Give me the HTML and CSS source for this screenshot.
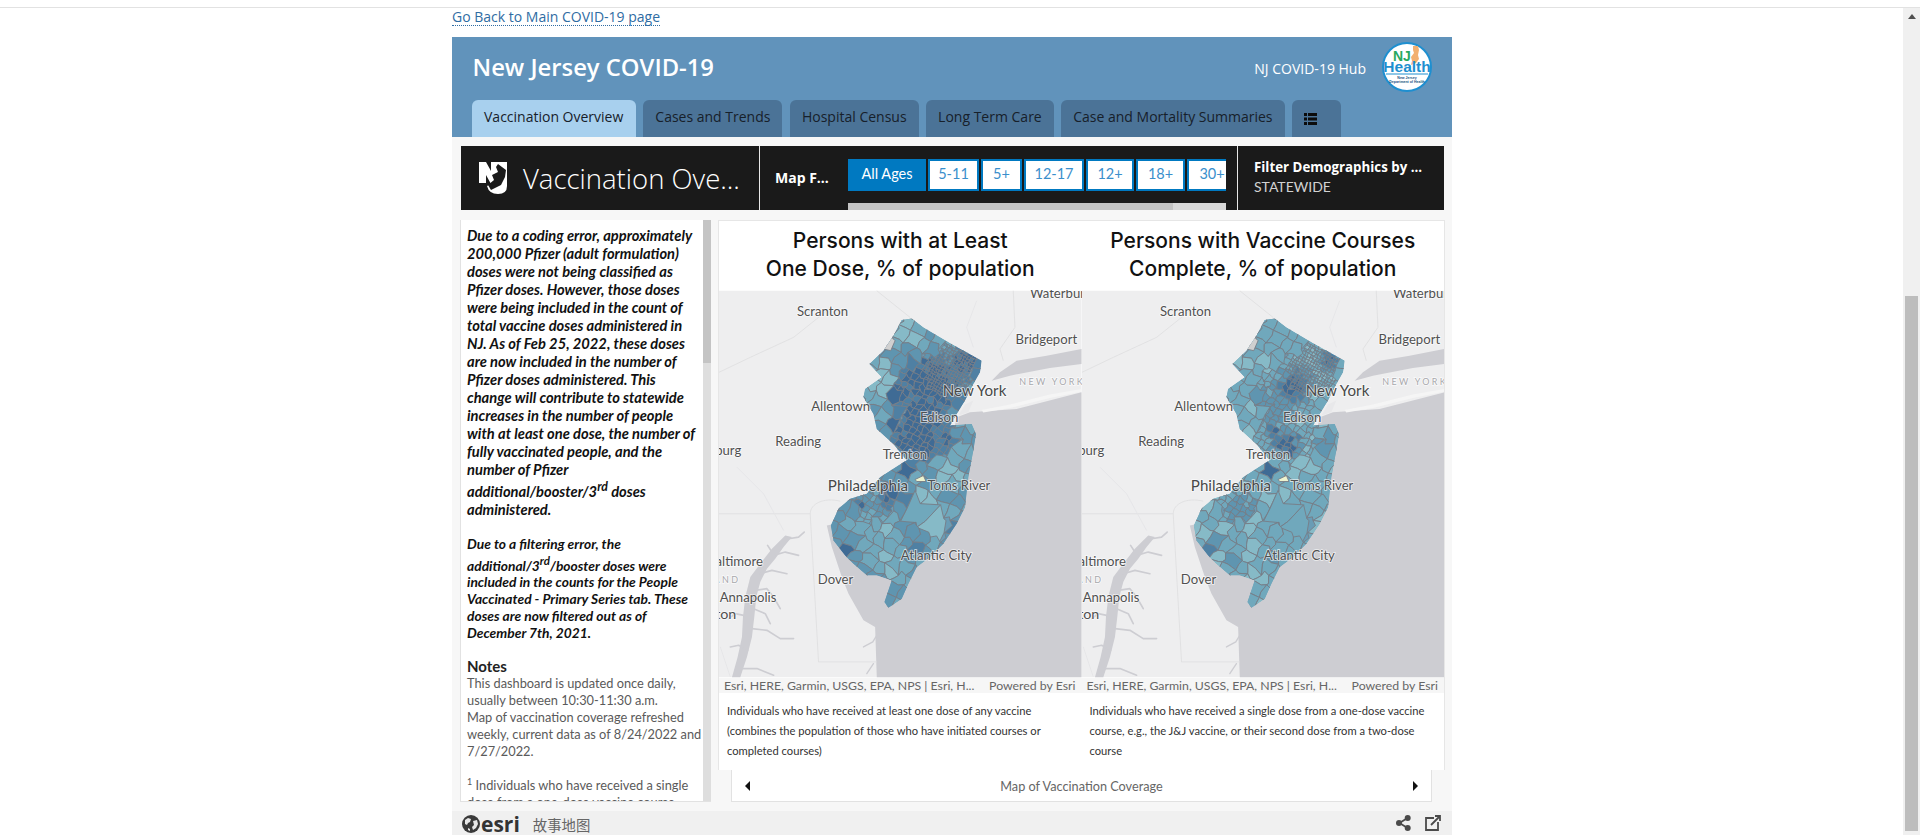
FILE: index.html
```html
<!DOCTYPE html>
<html lang="en">
  <head>
    <meta charset="UTF-8" />
    <meta name="viewport" content="width=device-width, initial-scale=1.0" />
    <title>New Jersey COVID-19</title>
    <link rel="stylesheet" href="styles.css">
  </head>
  <body>
    <div class="topLine"></div>
    <div class="pageRow">
      <div class="page">
        <div class="backRow"><a class="backLink" href="#">Go Back to Main COVID-19 page</a></div>

        <header class="hubHeader">
          <div class="hubTop">
            <h1>New Jersey COVID-19</h1>
            <span class="hubName">NJ COVID-19 Hub</span>
            <svg class="healthLogo" viewBox="0 0 50 50">
              <circle cx="25" cy="25" r="24" fill="#fff" stroke="#1e8fd0" stroke-width="2"/>
              <path d="M31 4l5 0 1 4-1 5 1 4-3 4-5 2 1-4-1-4 3-4-1-3z" fill="#f2b06f"/>
              <text x="11" y="19" class="logoNj">NJ</text>
              <text x="25" y="30" class="logoHealth" text-anchor="middle">Health</text>
              <path d="M4 32h42" stroke="#1e8fd0"/>
              <text x="25" y="36.500" class="logoSmall" text-anchor="middle">New Jersey</text>
              <text x="25" y="40.500" class="logoSmall" text-anchor="middle">Department of Health</text>
            </svg>
          </div>
          <nav class="tabs">
            <a class="tab active">Vaccination Overview</a>
            <a class="tab">Cases and Trends</a>
            <a class="tab">Hospital Census</a>
            <a class="tab">Long Term Care</a>
            <a class="tab">Case and Mortality Summaries</a>
            <a class="tab tabIcon">
              <svg width="13" height="12" viewBox="0 0 13 12"><path d="M0 0h3v3H0zM4 0h9v3H4zM0 4.500h3v3H0zM4 4.500h9v3H4zM0 9h3v3H0zM4 9h9v3H4z" fill="#0c0c0c"/></svg>
            </a>
          </nav>
        </header>

        <main class="story">
          <section class="blackBar">
            <div class="barTitle">
              <svg class="njLogo" viewBox="0 0 30 32">
                <path d="M2 0h7l5 9V0h4v22h-4L9 13v8H2z" fill="#fff"/>
                <path d="M18 0h12v24q0 8-9 8-9 0-11-8l4-2 4-12z" fill="#fff"/>
                <path d="M21 2l8 6-1 7-4 8-10 5-3-5 6-5-2-5 6-3-2-5z" fill="#1a1a1a"/>
              </svg>
              <span>Vaccination Ove...</span>
            </div>
            <div class="barFilter">
              <span class="filterLabel">Map F...</span>
              <div class="filterButtons">
                <div class="buttonRow">
                  <a class="ageBtn on">All Ages</a>
                  <a class="ageBtn">5-11</a>
                  <a class="ageBtn">5+</a>
                  <a class="ageBtn">12-17</a>
                  <a class="ageBtn">12+</a>
                  <a class="ageBtn">18+</a>
                  <a class="ageBtn">30+</a>
                </div>
                <div class="buttonScroll"><div class="buttonThumb"></div></div>
              </div>
            </div>
            <div class="barDemo">
              <strong>Filter Demographics by ...</strong>
              <span>STATEWIDE</span>
            </div>
          </section>

          <section class="storyRow">
            <aside class="notes">
              <div class="notesText">
                <p class="warn">Due to a coding error, approximately 200,000 Pfizer (adult formulation) doses were not being classified as Pfizer doses. However, those doses were being included in the count of total vaccine doses administered in NJ. As of Feb 25, 2022, these doses are now included in the number of Pfizer doses administered. This change will contribute to statewide increases in the number of people with at least one dose, the number of fully vaccinated people, and the number of Pfizer additional/booster/3<sup>rd</sup> doses administered.</p>
                <p class="warn warnTwo">Due to a filtering error, the additional/3<sup>rd</sup>/booster doses were included in the counts for the People Vaccinated - Primary Series tab. These doses are now filtered out as of December 7th, 2021.</p>
                <h3>Notes</h3>
                <p class="small">This dashboard is updated once daily,<br>usually between 10:30-11:30 a.m.<br>Map of vaccination coverage refreshed<br>weekly, current data as of 8/24/2022 and<br>7/27/2022.</p>
                <p class="small smallGap"><sup class="ref">1</sup> Individuals who have received a single<br>dose from a one-dose vaccine course</p>
              </div>
              <div class="notesScroll"><div class="notesThumb"></div></div>
            </aside>

            <div class="mapSide">
              <div class="mapPanel">
                <figure class="mapCol">
                  <h2>Persons with at Least<br>One Dose, % of population</h2>
                  <div class="mapBox">
                    <svg class="mapSvg" viewBox="6 30 1089 1161" data-map="dose"><use href="#baseMap"/><g class="cells"></g><use href="#mapLabels"/></svg>
                    <div class="attrib"><span>Esri, HERE, Garmin, USGS, EPA, NPS | Esri, H...</span><span>Powered by Esri</span></div>
                  </div>
                  <figcaption>Individuals who have received at least one dose of any vaccine (combines the population of those who have initiated courses or completed courses)</figcaption>
                </figure>
                <figure class="mapCol">
                  <h2>Persons with Vaccine Courses<br>Complete, % of population</h2>
                  <div class="mapBox">
                    <svg class="mapSvg" viewBox="6 30 1089 1161" data-map="full"><use href="#baseMap"/><g class="cells"></g><use href="#mapLabels"/></svg>
                    <div class="attrib"><span>Esri, HERE, Garmin, USGS, EPA, NPS | Esri, H...</span><span>Powered by Esri</span></div>
                  </div>
                  <figcaption>Individuals who have received a single dose from a one-dose vaccine course, e.g., the J&amp;J vaccine, or their second dose from a two-dose course</figcaption>
                </figure>
              </div>
              <div class="mapNav">
                <span class="arrow arrowLeft"></span>
                <span>Map of Vaccination Coverage</span>
                <span class="arrow arrowRight"></span>
              </div>
            </div>
          </section>
        </main>

        <footer class="storyFooter">
          <svg class="esriGlobe" width="18" height="18" viewBox="0 0 18 18">
            <circle cx="9" cy="9" r="9" fill="#3a3a3a"/>
            <path d="M3 5l3-2 3 1-1 3-2 1-1 2-2-1zM11 6l4-1 1 4-2 4-3 2-1-3 2-2zM6 13l2 1v2l-2-1z" fill="#e8e8e8"/>
          </svg>
          <span class="esriWord">esri</span>
          <span class="storyMaps">故事地图</span>
          <span class="footerIcons">
            <svg width="15" height="16" viewBox="0 0 15 16"><path d="M11.500 3L3.500 8l8 5" fill="none" stroke="#4a4a4a" stroke-width="1.800"/><circle cx="11.700" cy="3" r="3" fill="#4a4a4a"/><circle cx="3" cy="8" r="3" fill="#4a4a4a"/><circle cx="11.700" cy="13" r="3" fill="#4a4a4a"/></svg>
            <svg width="16" height="16" viewBox="0 0 16 16"><path d="M9 3H1v12h12V7" fill="none" stroke="#4a4a4a" stroke-width="1.800"/><path d="M6 10l8-8M10 1h5v5" fill="none" stroke="#4a4a4a" stroke-width="1.800"/></svg>
          </span>
        </footer>
      </div>

      <div class="pageScroll">
        <div class="scrollUp"></div>
        <div class="scrollThumb"></div>
      </div>
    </div>

    <!-- shared pieces of the two maps, coordinates are 3x the map's pixels -->
    <svg class="mapDefs" width="0" height="0">
      <defs>
        <path id="njShape" d="M555 118L585 113 620 140 700 188 795 240 790 275 770 310 745 360 720 400 700 435 765 430 778 460 770 510 755 590 745 680 720 730 680 790 640 830 600 860 575 910 555 955 515 982 503 965 525 900 480 885 450 885 410 850 385 825 350 780 342 735 365 685 400 655 450 640 490 590 560 545 570 540 530 490 480 445 470 400 440 350 445 325 495 290 458 250 500 210 530 165Z"/>
        <clipPath id="njClip"><use href="#njShape"/></clipPath>
        <g id="baseMap">
          <rect x="6" y="30" width="1089" height="1161" fill="#eeeeef"/>
          <path d="M1095 335L900 385 760 395 720 410 700 500 500 700 330 735 345 800 375 890 395 940 440 1020 475 1040 480 1191 1095 1191Z" fill="#cdcdd2"/>
          <path d="M1095 205L990 225 900 240 850 275 825 300 880 285 1000 262 1095 250Z" fill="#cdcdd2"/>
          <path d="M745 372L770 360 755 395 725 405Z" fill="#e8e8ea"/>
          <path d="M1095 333L1000 352 880 382 800 396 795 388 880 372 1000 342 1095 325Z" fill="#f5f5f5"/>
          <path fill="#cdcdd2" d="M205 765L225 770 200 800 175 835 150 865 130 905 118 950 112 1010 105 1070 90 1130 70 1191 45 1191 62 1130 75 1070 78 1010 85 950 100 890 130 850 165 805Z"/>
          <g fill="none" stroke="#cdcdd2" stroke-linecap="round" stroke-linejoin="round" stroke-width="5">
            <path d="M215 775L245 770 262 755M165 815L152 795M170 825L205 815 245 825M130 880L165 870 210 880M115 930L150 925 170 950 190 985M110 985L145 1000 160 1030M105 1045L150 1050 190 1075 230 1075M92 1110L65 1095 40 1100M75 1165L120 1165 170 1185M80 1005L55 1000 35 1015"/>
            <path d="M480 1065L468 1085 440 1100M470 1150L450 1180" stroke-width="4"/>
          </g>
          <g fill="none" stroke="#dedee0" stroke-width="2.500">
            <path d="M6 700H280C280 670 320 650 370 662M280 700L305 1145H480M6 275L100 230 230 170 330 90M480 30L580 110M890 30L895 140 850 205 860 240"/>
          </g>
          <g fill="none" stroke="#e5e5e7" stroke-width="2.500">
            <path d="M60 560L140 640 200 750M770 200L750 140 780 60M10 1100L40 1190"/>
          </g>
        </g>
        <g id="mapLabels" class="mapLabels">
          <text x="240" y="105">Scranton</text>
          <text x="940" y="52">Waterbury</text>
          <text x="897" y="189">Bridgeport</text>
          <text x="678" y="345" class="big">New York</text>
          <text x="908" y="313" class="region">NEW YORK</text>
          <text x="283" y="392">Allentown</text>
          <text x="610" y="423">Edison</text>
          <text x="175" y="495">Reading</text>
          <text x="73" y="524" text-anchor="end">Harrisburg</text>
          <text x="498" y="534">Trenton</text>
          <text x="333" y="632" class="big">Philadelphia</text>
          <text x="632" y="630">Toms River</text>
          <text x="138" y="857" text-anchor="end">Baltimore</text>
          <text x="70" y="907" text-anchor="end" class="region">MARYLAND</text>
          <text x="8" y="965">Annapolis</text>
          <text x="58" y="1015" text-anchor="end" class="mid">Washington</text>
          <text x="552" y="840">Atlantic City</text>
          <text x="303" y="912">Dover</text>
        </g>
      </defs>
    </svg>

    <script src="map.js"></script>
  </body>
</html>
```

FILE: styles.css
```css
* {
  box-sizing: border-box;
}
html, body {
  height: 100%;
}
body {
  margin: 0;
  background-color: #fff;
  color: #1a1a1a;
  font-family: "Open Sans", sans-serif;
  overflow: hidden;
}
h1, h2, h3, p, figure {
  margin: 0;
}
.topLine {
  height: 8px;
  border-bottom: 1px solid #e2e2e2;
}
.pageRow {
  display: flex;
  height: calc(100vh - 8px);
}
.page {
  flex: 1;
  display: flex;
  flex-direction: column;
  align-items: center;
  padding-left: 1px;
  overflow: hidden;
}
.pageScroll {
  width: 17px;
  background-color: #f0f0f0;
  padding: 6px 2px 0;
}
.scrollUp {
  width: 0;
  margin: 0 auto;
  border-left: 4px solid transparent;
  border-right: 4px solid transparent;
  border-bottom: 5px solid #505050;
}
.scrollThumb {
  height: 535px;
  margin-top: 277px;
  background-color: #bdbdbd;
}

/* top link and blue header */
.backRow {
  display: flex;
  align-items: flex-start;
  width: 1000px;
  height: 29px;
  flex-shrink: 0;
}
.backLink {
  color: #2f6ca3;
  font-size: 14px;
  line-height: 17px;
  border-bottom: 1px dotted #2f6ca3;
  text-decoration: none;
}
.hubHeader {
  width: 1000px;
  height: 100px;
  flex-shrink: 0;
  background-color: #6193bb;
  padding: 0 20px 0 19.500px;
  display: flex;
  flex-direction: column;
}
.hubTop {
  height: 63px;
  padding-bottom: 4px;
  display: flex;
  align-items: center;
  color: #fff;
}
.hubTop h1 {
  font-size: 23.800px;
  font-weight: 600;
  padding-left: 1px;
  flex: 1;
}
.hubName {
  font-size: 14px;
  margin-top: 3px;
  margin-right: 16px;
}
.healthLogo {
  width: 50px;
  height: 50px;
}
.logoNj {
  font: 700 14px "Liberation Sans", sans-serif;
  fill: #2aa860;
}
.logoHealth {
  font: 700 15.500px "Liberation Sans", sans-serif;
  fill: #1e8fd0;
}
.logoSmall {
  font: 700 3.500px "Liberation Sans", sans-serif;
  fill: #1a4f80;
}
.tabs {
  display: flex;
  gap: 7.500px;
  height: 37px;
}
.tab {
  padding: 0 12px;
  background-color: #4b7397;
  color: #17202a;
  font-size: 14px;
  line-height: 34px;
  border-radius: 6px 6px 0 0;
  white-space: nowrap;
}
.tab.active {
  padding: 0 12.500px;
  background-color: #a8d0ee;
}
.tabIcon {
  width: 49px;
  padding: 0 12px;
  display: flex;
  align-items: center;
}

/* story body */
.story {
  width: 1000px;
  height: 674px;
  flex-shrink: 0;
  background-color: #f7f7f7;
  padding: 9px 7px 0 8px;
  display: flex;
  flex-direction: column;
}
.blackBar {
  height: 64px;
  margin: 0 1px 0 1px;
  display: flex;
  background-color: #1a1a1a;
  color: #fff;
}
.barTitle {
  width: 299px;
  display: flex;
  align-items: center;
  gap: 16px;
  padding-left: 16px;
  border-right: 1px solid #e8e8e8;
  font-size: 27.500px;
  font-weight: 300;
  white-space: nowrap;
}
.njLogo {
  width: 30px;
  height: 32px;
}
.barFilter {
  width: 478px;
  display: flex;
  border-right: 1px solid #e8e8e8;
  padding-left: 15px;
}
.filterLabel {
  width: 73px;
  font-size: 14px;
  font-weight: 700;
  line-height: 64px;
}
.filterButtons {
  width: 378px;
  padding-top: 13px;
  overflow: hidden;
  display: flex;
  flex-direction: column;
}
.buttonRow {
  display: flex;
  gap: 2px;
  height: 32px;
}
.ageBtn {
  flex-shrink: 0;
  width: 48px;
  border: 2px solid #0079c1;
  background-color: #fff;
  color: #3a8fcc;
  font: 14.500px/26px Lato, sans-serif;
  text-align: center;
}
.ageBtn:nth-child(1) { width: 78px; }
.ageBtn:nth-child(2) { width: 51px; }
.ageBtn:nth-child(3) { width: 41px; }
.ageBtn:nth-child(4) { width: 60px; }
.ageBtn:nth-child(6) { width: 49px; }
.ageBtn:nth-child(7) { width: 50px; }
.ageBtn.on {
  background-color: #0079c1;
  color: #fff;
}
.buttonScroll {
  height: 7px;
  margin-top: 12px;
  background-color: #d9d9d9;
}
.buttonThumb {
  width: 325px;
  height: 100%;
  background-color: #c4c4c4;
}
.barDemo {
  flex: 1;
  display: flex;
  flex-direction: column;
  justify-content: center;
  gap: 2px;
  padding: 0 0 3px 16px;
  font-size: 13.300px;
  white-space: nowrap;
}
.barDemo span {
  color: #d2d2d2;
  font: 14px Lato, sans-serif;
}

.storyRow {
  display: flex;
  gap: 7px;
  margin-top: 10px;
  height: 582px;
}
.notes {
  width: 251px;
  display: flex;
  background-color: #fff;
  border-bottom: 1px solid #e2e2e2;
  border-left: 1px solid #e2e2e2;
}
.notesText {
  flex: 1;
  overflow: hidden;
  padding: 6px 2px 0 6px;
}
.notesScroll {
  width: 8px;
  background-color: #dedede;
}
.notesThumb {
  height: 143px;
  background-color: #c4c4c4;
}
.warn {
  font: italic 700 14.700px/18px Lato, sans-serif;
  color: #111;
}
.warnTwo {
  font-size: 13.800px;
  line-height: 17px;
  margin-top: 17px;
}
.notes h3 {
  font: 700 15px/18px Lato, sans-serif;
  margin-top: 16px;
  color: #222;
}
.small {
  font: 12.800px/17px Lato, sans-serif;
  color: #5a5a5a;
  white-space: nowrap;
}
.smallGap {
  margin-top: 17px;
}
.ref {
  font-size: 9px;
  line-height: 0;
}

.mapSide {
  width: 727px;
  display: flex;
  flex-direction: column;
  align-items: center;
}
.mapPanel {
  width: 100%;
  height: 550px;
  flex-shrink: 0;
  display: flex;
  background-color: #fff;
  border: 1px solid #e6e6e6;
  border-bottom: 0;
}
.mapCol {
  width: 50%;
  display: flex;
  flex-direction: column;
}
.mapCol h2 {
  height: 69px;
  padding-top: 6px;
  font: 500 21px/28px Inter, sans-serif;
  text-align: center;
  color: #111;
}
.mapBox {
  position: relative;
  height: 403px;
  flex-shrink: 0;
}
.mapSvg {
  display: block;
  width: 100%;
  height: 388px;
}
.attrib {
  display: flex;
  justify-content: space-between;
  height: 15px;
  padding: 0 6px 0 5px;
  background-color: #f6f6f6;
  color: #666;
  font: 12.300px/15px Lato, sans-serif;
}
.mapCol figcaption {
  padding: 8px 8px 0;
  font: 11.200px/20px Lato, sans-serif;
  color: #333;
}
.mapNav {
  width: 701px;
  height: 32px;
  flex-shrink: 0;
  display: flex;
  justify-content: space-between;
  align-items: center;
  padding: 0 13px;
  background-color: #fff;
  border: 1px solid #e2e2e2;
  border-top: 0;
  font: 12.700px Lato, sans-serif;
  color: #666;
}
.arrow {
  width: 0;
  border-top: 5px solid transparent;
  border-bottom: 5px solid transparent;
}
.arrowLeft {
  border-right: 5px solid #111;
}
.arrowRight {
  border-left: 5px solid #111;
}

.storyFooter {
  width: 1000px;
  height: 40px;
  flex-shrink: 0;
  background-color: #f0f0f0;
  display: flex;
  align-items: flex-start;
  padding: 4px 11px 0 10px;
}
.esriWord {
  font: 700 21px/19px "Open Sans", sans-serif;
  color: #333;
  margin-left: 1px;
}
.storyMaps {
  font: 14.400px/20px "Noto Sans CJK SC", sans-serif;
  color: #666;
  margin-left: 13px;
}
.footerIcons {
  margin-left: auto;
  display: flex;
  gap: 14px;
}

/* map text */
.mapDefs {
  position: absolute;
}
.mapLabels text {
  font: 39.500px Lato, sans-serif;
  fill: #505050;
  stroke: #fff;
  stroke-width: 5px;
  stroke-opacity: 0.7;
  paint-order: stroke;
}
.mapLabels .big {
  font-size: 45.500px;
  fill: #484848;
}
.mapLabels .mid {
  font-size: 43px;
}
.mapLabels .region {
  font-size: 27px;
  letter-spacing: 7px;
  fill: #a8a8ac;
}
.cells path {
  stroke: #777e88;
  stroke-width: 2.800px;
}
```

FILE: map.js
```js
// the choropleth is too dense to list by hand, so the municipalities are
// built as a jittered mesh, finer where the real ones are small

const colors = ["#b9d3cc", "#86bac7", "#70a8bc", "#5f95b0", "#4f80a3", "#3f6b95"];

// x, y, radius, strength
const shades = {
  dose: {
    base: 0.55,
    spots: [
      [640, 320, 95, 0.5], [610, 470, 85, 0.5], [760, 240, 45, 0.45], [540, 350, 28, 0.3],
      [530, 420, 22, 0.4], [525, 640, 35, 0.5], [415, 805, 26, 0.5], [430, 675, 15, 0.5],
      [700, 480, 20, 0.4], [575, 570, 16, 0.5], [610, 810, 20, 0.4], [705, 745, 14, 0.5],
      [570, 145, 45, -0.3], [490, 275, 50, -0.3], [470, 345, 35, -0.35], [625, 660, 45, -0.33],
      [660, 720, 40, -0.3], [510, 850, 45, -0.35], [700, 570, 45, -0.3], [470, 770, 70, -0.25],
    ],
  },
  full: {
    base: 0.36,
    spots: [
      [650, 310, 50, 0.5], [620, 490, 42, 0.6], [575, 448, 18, 0.6], [755, 240, 35, 0.5],
      [700, 745, 14, 0.6], [568, 570, 14, 0.7], [405, 800, 22, 0.4], [480, 680, 50, 0.25],
      [600, 360, 70, 0.25], [740, 470, 35, 0.25], [580, 850, 30, 0.25], [455, 855, 18, 0.3],
      [508, 850, 18, -0.5], [707, 575, 10, -0.4], [620, 660, 40, -0.1],
    ],
  },
};

let seed = 7;
function rand() {
  seed = (seed * 16807) % 2147483647;
  return seed / 2147483647;
}

// mesh is turned so its rows do not line up with the page
function turn(u, v) {
  const a = 0.52;
  return [560 + u * Math.cos(a) - v * Math.sin(a), 550 + u * Math.sin(a) + v * Math.cos(a)];
}

function density(x, y) {
  // cells get small in the north east, around Newark and in Camden county
  if (Math.hypot(x - 700, y - 270) < 75) return 9;
  if (Math.hypot(x - 630, y - 340) < 90) return 18;
  if (Math.hypot(x - 620, y - 460) < 90) return 18;
  if (Math.hypot(x - 470, y - 660) < 60) return 18;
  if (Math.hypot(x - 650, y - 710) < 60) return 72;
  return 36;
}

function splitCells(u, v, size, list) {
  const [x, y] = turn(u + size / 2, v + size / 2);
  if (size > density(x, y)) {
    const half = size / 2;
    splitCells(u, v, half, list);
    splitCells(u + half, v, half, list);
    splitCells(u, v + half, half, list);
    splitCells(u + half, v + half, half, list);
    return;
  }
  list.push({ u, v, size, x, y });
}

function corner(u, v, size) {
  // same jitter for the same corner, so neighbours share it
  const k = Math.sin(u * 12.9898 + v * 78.233) * 43758.5453;
  const a = k - Math.floor(k);
  const b = (k * 7.13) - Math.floor(k * 7.13);
  return turn(u + (a - 0.5) * size * 0.6, v + (b - 0.5) * size * 0.6);
}

function shadeAt(map, x, y) {
  const info = shades[map];
  let v = info.base + (rand() - 0.5) * 0.26;
  info.spots.forEach(([sx, sy, r, amount]) => {
    const d = Math.hypot(x - sx, y - sy) / r;
    if (d < 1.3) v += amount * (1 - (d * d) / 1.7);
  });
  const i = Math.round(Math.min(1, Math.max(0, v)) * (colors.length - 1));
  return colors[i];
}

function drawMap(svg) {
  const map = svg.dataset.map;
  const group = svg.querySelector(".cells");
  const cells = [];
  for (let v = -648; v < 648; v += 72) {
    for (let u = -648; u < 648; u += 72) {
      splitCells(u, v, 72, cells);
    }
  }
  let paths = `<use href="#njShape" fill="#6a9cb5"/>`;
  cells.forEach((c) => {
    const s = c.size;
    const h = s / 2;
    const pts = [
      corner(c.u, c.v, s),
      corner(c.u + h, c.v, s * 0.6),
      corner(c.u + s, c.v, s),
      corner(c.u + s, c.v + h, s * 0.6),
      corner(c.u + s, c.v + s, s),
      corner(c.u + h, c.v + s, s * 0.6),
      corner(c.u, c.v + s, s),
      corner(c.u, c.v + h, s * 0.6),
    ];
    const d = "M" + pts.map((p) => p[0].toFixed(1) + " " + p[1].toFixed(1)).join("L") + "Z";
    paths += `<path d="${d}" fill="${shadeAt(map, c.x, c.y)}"/>`;
  });
  // the two odd pieces that both maps show
  paths += `<path d="M595 597L620 585 628 603 600 603Z" fill="#eef3cf"/>`;
  paths += `<path d="M500 205L525 170 535 180 522 210Z" fill="#d0d0d0"/>`;
  group.setAttribute("clip-path", "url(#njClip)");
  group.innerHTML = paths;
}

document.querySelectorAll(".mapSvg").forEach(drawMap);
```
